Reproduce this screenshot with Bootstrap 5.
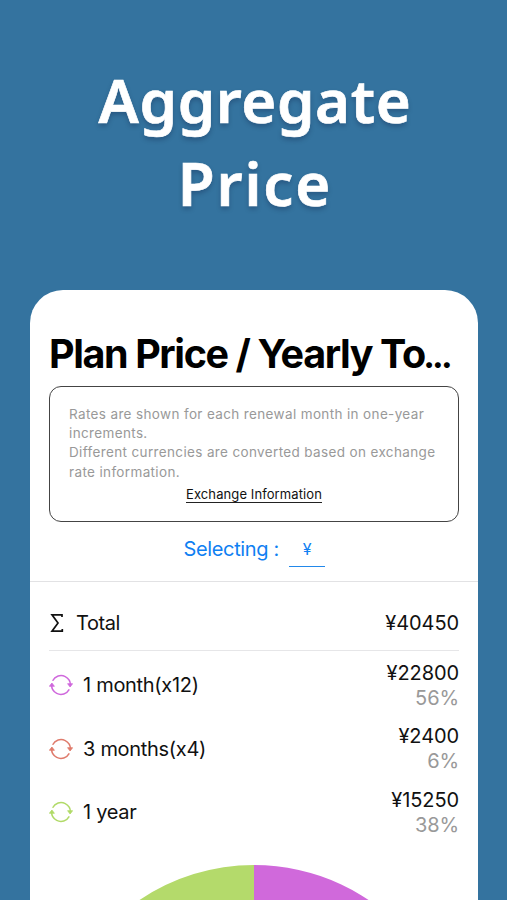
<!DOCTYPE html>
<html lang="en">
<head>
<meta charset="utf-8">
<meta name="viewport" content="width=device-width, initial-scale=1">
<title>Aggregate Price</title>
<link href="https://cdn.jsdelivr.net/npm/bootstrap@5.3.0/dist/css/bootstrap.min.css" rel="stylesheet">
<style>
body{background:#34739f;font-family:Inter,"Liberation Sans",sans-serif;color:#111;height:900px;overflow:hidden}
.hero{height:290px;padding-top:59px;color:#fff;font-family:"Noto Sans","Open Sans",sans-serif;font-weight:600;font-size:60px;line-height:83px;text-shadow:0 3px 5px rgba(0,0,40,.25);-webkit-text-stroke:.7px #fff}
.hero span{display:block}
.hero-a{letter-spacing:.6px;padding-left:3px}
.hero-b{letter-spacing:1.9px;padding-left:3px}
.screen{margin:0 29px 0 30px;width:448px;height:610px;border-radius:33px 33px 0 0;overflow:hidden}
.side{padding-left:19px;padding-right:19px}
.title{font-size:39.5px;font-weight:700;line-height:48px;letter-spacing:-1.4px;color:#000;padding-top:39.5px;height:96px;white-space:nowrap}
.dots{letter-spacing:-2.8px;font-size:35px;margin-left:-1.5px}
.notice{height:136px;border:1.5px solid #444;border-radius:12px;padding:18px 19px 0;font-size:13.5px;line-height:19.2px;letter-spacing:.36px;color:#999;white-space:nowrap}
.notice a{font-size:13px;letter-spacing:.1px;line-height:15px;color:#111;text-decoration:none;border-bottom:1px solid #222;margin-top:5px}
.picker{height:60px;border-bottom:1.5px solid #e2e2e4;color:#0f80f2;font-size:20px;padding-left:153.5px;padding-bottom:5px;letter-spacing:-.35px}
.yen{width:36px;height:35px;border-bottom:1.5px solid #2288ea;font-size:16px;line-height:34px;margin-left:10px}
.total{height:69px;border-bottom:1.5px solid #e6e6e8;padding-top:14px}
.entries{padding-top:3px}
.entry{height:63.5px}
.label{font-size:20px;line-height:24px;letter-spacing:-.4px}
.entry .label{letter-spacing:-.3px;margin-left:2px}
.mark-row{margin-bottom:1.5px}
.amount{font-size:20px;line-height:25px;letter-spacing:-.1px}
.percent{color:#999}
.pie{margin-top:20px;display:block}
</style>
<script src="https://cdn.jsdelivr.net/npm/bootstrap@5.3.0/dist/js/bootstrap.bundle.min.js"></script>
</head>
<body>
<svg width="0" height="0" class="d-block">
  <symbol id="cycle" viewBox="0 0 24 22">
    <circle cx="12" cy="11" r="9.4" fill="none" stroke="currentColor" stroke-width="1.5" stroke-dasharray="25 4.53" transform="rotate(-153 12 11)"/>
    <path d="M.4 12.3 2.9 9 5.4 12.3ZM18.6 9.7H23.6L21.1 13Z" fill="currentColor" stroke="currentColor" stroke-width=".8" stroke-linejoin="round"/>
  </symbol>
</svg>
<header class="hero text-center"><span class="hero-a">Aggregate</span><span class="hero-b">Price</span></header>
<main class="screen bg-white">
  <div class="side">
    <h1 class="title mb-0">Plan Price / Yearly To<span class="dots">...</span></h1>
    <div class="notice">
      Rates are shown for each renewal month in one-year<br>increments.<br>Different currencies are converted based on exchange<br>rate information.
      <div class="text-center"><a href="#" class="d-inline-block">Exchange Information</a></div>
    </div>
  </div>
  <div class="picker d-flex align-items-center"><span>Selecting :</span><span class="yen text-center">¥</span></div>
  <div class="side">
    <div class="total d-flex align-items-center justify-content-between">
      <div class="d-flex align-items-center">
        <svg width="27" height="22" viewBox="0 0 27 22" fill="none" stroke="#111" stroke-width="1.7"><path d="M13 5V2.8H3L9 11 3 19.2H13.3V17"/></svg>
        <span class="label">Total</span>
      </div>
      <span class="amount">¥40450</span>
    </div>
    <div class="entries">
      <div class="entry d-flex align-items-center justify-content-between">
        <div class="mark-row d-flex align-items-center gap-2"><svg width="24" height="22" style="color:#cf68dc"><use href="#cycle"/></svg><span class="label">1 month(x12)</span></div>
        <div class="amount text-end">¥22800<div class="percent">56%</div></div>
      </div>
      <div class="entry d-flex align-items-center justify-content-between">
        <div class="mark-row d-flex align-items-center gap-2"><svg width="24" height="22" style="color:#df7b6c"><use href="#cycle"/></svg><span class="label">3 months(x4)</span></div>
        <div class="amount text-end">¥2400<div class="percent">6%</div></div>
      </div>
      <div class="entry d-flex align-items-center justify-content-between">
        <div class="mark-row d-flex align-items-center gap-2"><svg width="24" height="22" style="color:#b1da68"><use href="#cycle"/></svg><span class="label">1 year</span></div>
        <div class="amount text-end">¥15250<div class="percent">38%</div></div>
      </div>
    </div>
    <svg class="pie" width="410" height="410" viewBox="-205 -205 410 410">
      <path d="M0 0V-205A205 205 0 1 1 -75.5 190.6Z" fill="#d069db"/>
      <path d="M0 0-75.5 190.6A205 205 0 0 1 -140.3 149.4Z" fill="#df7b6c"/>
      <path d="M0 0-140.3 149.4A205 205 0 0 1 0-205Z" fill="#b4da6b"/>
    </svg>
  </div>
</main>
</body>
</html>
